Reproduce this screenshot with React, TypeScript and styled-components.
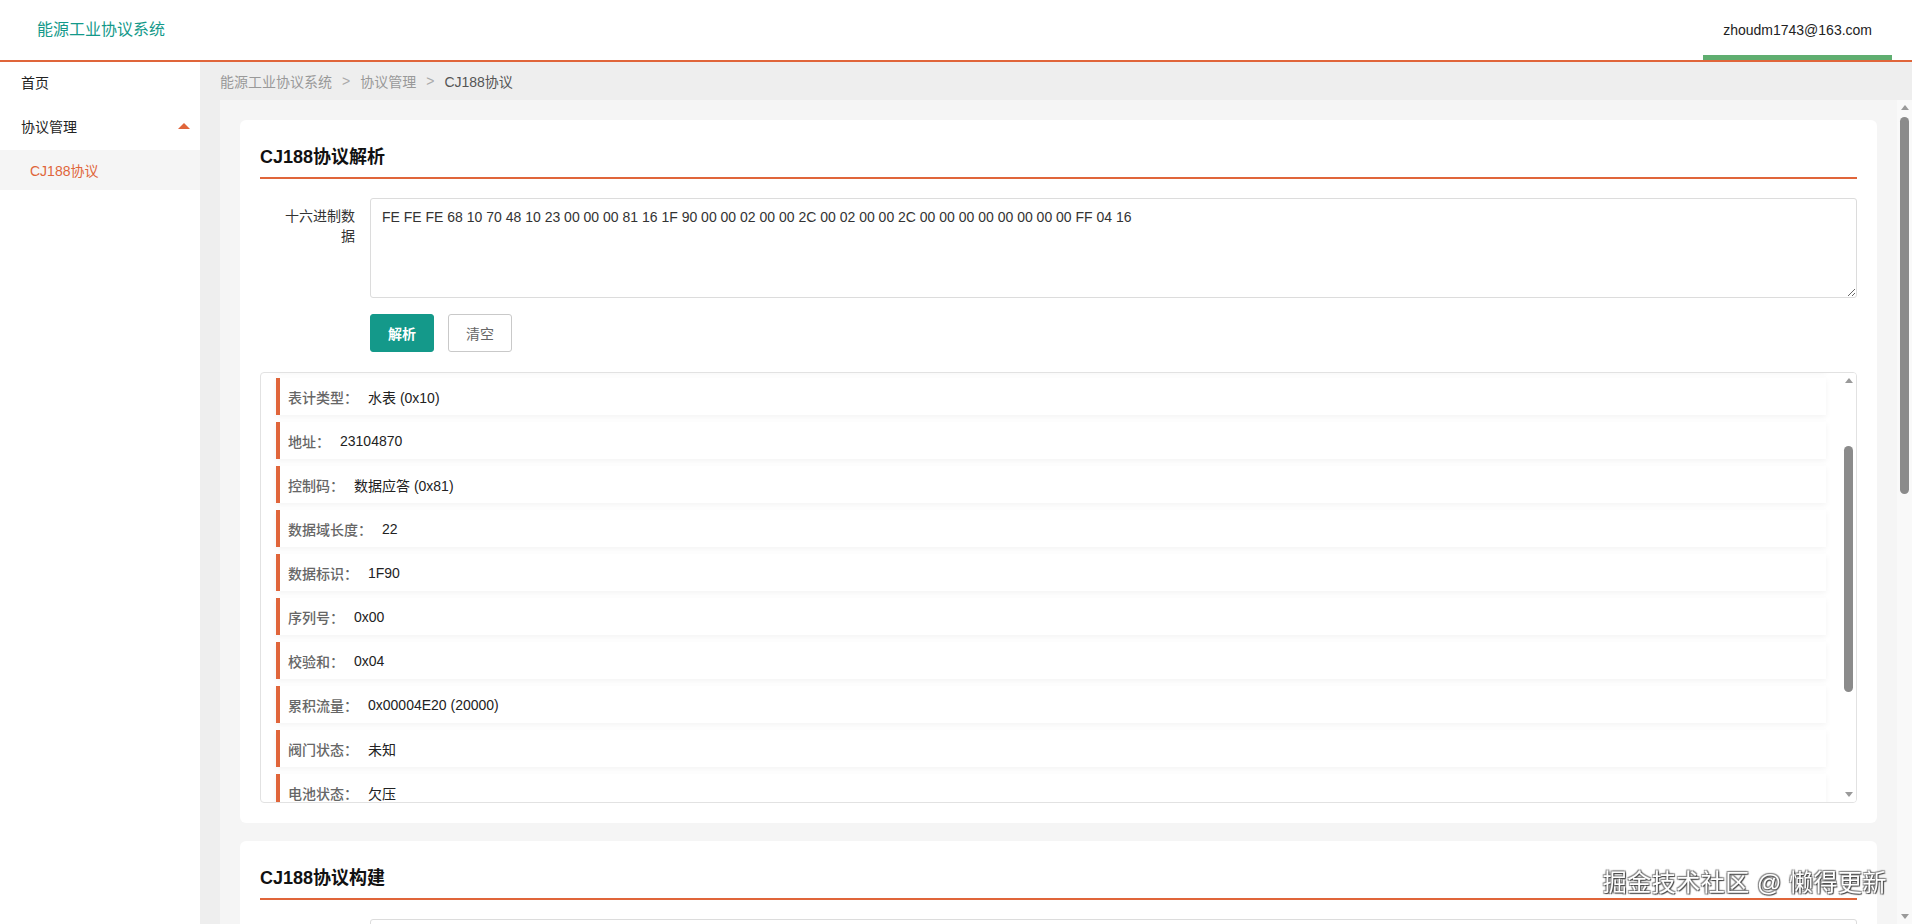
import React, { useLayoutEffect, useRef, useState } from 'react'
import styled, { createGlobalStyle, css } from 'styled-components'

const orange = '#e0653a'
const teal = '#14998a'

const GlobalStyle = createGlobalStyle`
  html, body {
    margin: 0;
    padding: 0;
    height: 100%;
    overflow: hidden;
  }
  body {
    font-family: "Liberation Sans", Arial, "Noto Sans CJK SC", sans-serif;
    font-size: 14px;
    color: #333;
    background: #fff;
  }
  #root { height: 100%; }
  * { box-sizing: border-box; }
`

const Page = styled.div`
  height: 100%;
  display: flex;
  flex-direction: column;
`

const Header = styled.header`
  height: 62px;
  flex-shrink: 0;
  display: flex;
  align-items: center;
  justify-content: space-between;
  padding: 0 20px 0 37px;
  border-bottom: 2px solid ${orange};
  background: #fff;
`

const Brand = styled.div`
  color: ${teal};
  font-size: 16px;
  padding-bottom: 4px;
`

const UserTab = styled.div`
  height: 60px;
  display: flex;
  align-items: center;
  padding: 5px 20px 0;
  border-bottom: 5px solid #5fae70;
  color: #222;
  font-size: 14px;
`

const Body = styled.div`
  flex: 1;
  display: flex;
  min-height: 0;
`

const Sidebar = styled.nav`
  width: 200px;
  flex-shrink: 0;
  background: #fff;
`

const MenuItem = styled.div<{ $active?: boolean; $sub?: boolean; $h: number }>`
  height: ${p => p.$h}px;
  display: flex;
  align-items: center;
  justify-content: space-between;
  padding: 0 10px 0 ${p => (p.$sub ? 30 : 21)}px;
  color: ${p => (p.$active ? orange : '#222')};
  background: ${p => (p.$active ? '#f5f5f5' : '#fff')};
  font-size: 14px;
`

const Caret = styled.span`
  width: 0;
  height: 0;
  border-left: 6px solid transparent;
  border-right: 6px solid transparent;
  border-bottom: 6px solid ${orange};
`

const Main = styled.main`
  flex: 1;
  min-width: 0;
  display: flex;
  flex-direction: column;
  background: #eeeeee;
  padding-left: 20px;
`

const Crumbs = styled.div`
  height: 38px;
  flex-shrink: 0;
  display: flex;
  align-items: center;
  color: #999;
  font-size: 14px;
`

const CrumbSep = styled.span`
  margin: 0 10px;
  color: #aaa;
`

const CrumbCurrent = styled.span`
  color: #555;
`

/* ---- scroll pane with a drawn scrollbar rail ---- */

const Frame = styled.div`
  display: flex;
  min-height: 0;
  overflow: hidden;
`

const Viewport = styled.div<{ $pad: string }>`
  flex: 1;
  min-width: 0;
  overflow-y: auto;
  scrollbar-width: none;
  padding: ${p => p.$pad};
  &::-webkit-scrollbar { display: none; }
`

const Rail = styled.div<{ $bg: string }>`
  width: 15px;
  flex-shrink: 0;
  display: flex;
  flex-direction: column;
  background: ${p => p.$bg};
`

const Arrow = styled.div<{ $down?: boolean }>`
  height: 15px;
  flex-shrink: 0;
  display: flex;
  align-items: center;
  justify-content: center;

  &::after {
    content: '';
    width: 0;
    height: 0;
    border-left: 4px solid transparent;
    border-right: 4px solid transparent;
    ${p =>
      p.$down
        ? css`border-top: 5px solid #9a9a9a;`
        : css`border-bottom: 5px solid #9a9a9a;`}
  }
`

const Track = styled.div`
  flex: 1;
  min-height: 0;
  padding: 2px 3px;
`

const Thumb = styled.div`
  width: 9px;
  border-radius: 5px;
  background: #8b8b8b;
`

type PaneProps = {
  children: React.ReactNode
  className?: string
  pad: string
  railBg: string
  startAt?: number
}

const ScrollPane = ({ children, className, pad, railBg, startAt = 0 }: PaneProps) => {
  const viewRef = useRef<HTMLDivElement>(null)
  const trackRef = useRef<HTMLDivElement>(null)
  const [bar, setBar] = useState({ top: 0, height: 0 })

  useLayoutEffect(() => {
    const el = viewRef.current
    const track = trackRef.current
    if (!el || !track) return
    const update = () => {
      const t = track.clientHeight - 4
      const h = Math.max(20, (t * el.clientHeight) / el.scrollHeight)
      const top = (t * el.scrollTop) / el.scrollHeight
      setBar({ top, height: h })
    }
    el.scrollTop = startAt
    update()
    el.addEventListener('scroll', update)
    window.addEventListener('resize', update)
    return () => {
      el.removeEventListener('scroll', update)
      window.removeEventListener('resize', update)
    }
  }, [startAt])

  return (
    <Frame className={className}>
      <Viewport ref={viewRef} $pad={pad}>
        {children}
      </Viewport>
      <Rail $bg={railBg}>
        <Arrow />
        <Track ref={trackRef}>
          <Thumb style={{ marginTop: bar.top, height: bar.height }} />
        </Track>
        <Arrow $down />
      </Rail>
    </Frame>
  )
}

const MainPane = styled(ScrollPane)`
  flex: 1;
  background: #f5f5f5;
`

const ResultPane = styled(ScrollPane)`
  margin-top: 20px;
  height: 431px;
  border: 1px solid #e2e2e2;
  border-radius: 4px;
  background: #fff;
`

/* ---- cards and forms ---- */

const Card = styled.section<{ $minHeight?: number }>`
  background: #fff;
  border-radius: 6px;
  padding: 20px;
  margin-bottom: 18px;
  min-height: ${p => (p.$minHeight ? `${p.$minHeight}px` : 'auto')};

  &:last-child { margin-bottom: 0; }
`

const CardTitle = styled.h3`
  margin: 0 0 19px;
  padding: 5px 0 8px;
  line-height: 24px;
  font-size: 18px;
  font-weight: bold;
  color: #111;
  border-bottom: 2px solid ${orange};
`

const FormRow = styled.div`
  display: grid;
  grid-template-columns: 110px 1fr;
  margin-bottom: 16px;
`

const Label = styled.label`
  text-align: right;
  padding: 8px 15px 0 14px;
  line-height: 20px;
  color: #333;
  font-size: 14px;
`

const TextArea = styled.textarea<{ $height?: number }>`
  width: 100%;
  height: ${p => p.$height ?? 100}px;
  border: 1px solid #dcdcdc;
  border-radius: 3px;
  padding: 8px 11px;
  line-height: 20px;
  font-family: inherit;
  font-size: 14px;
  color: #333;
  outline: none;
`

const fieldBox = css`
  width: 100%;
  height: 36px;
  border: 1px solid #dcdcdc;
  border-radius: 3px;
  font-family: inherit;
  font-size: 14px;
  color: #333;
  background: #fff;
  outline: none;
`

const Input = styled.input`
  ${fieldBox}
  padding: 0 11px;
`

const Select = styled.select`
  ${fieldBox}
  padding: 0 7px;
`

const Actions = styled.div`
  display: flex;
  gap: 14px;
`

const Button = styled.button<{ $primary?: boolean }>`
  width: 64px;
  height: 38px;
  border-radius: 3px;
  font-family: inherit;
  font-size: 14px;
  cursor: pointer;
  ${p =>
    p.$primary
      ? css`
          background: ${teal};
          border: 1px solid ${teal};
          color: #fff;
          font-weight: bold;
        `
      : css`
          background: #fff;
          border: 1px solid #c9c9c9;
          color: #666;
        `}
`

const ResultItem = styled.div`
  height: 37px;
  margin: 0 0 7px;
  display: flex;
  align-items: center;
  padding-left: 8px;
  background: #fff;
  border-left: 4px solid ${orange};
  box-shadow: 0 2px 6px rgba(0, 0, 0, 0.05);
`

const ItemLabel = styled.span`
  color: #666;
  font-weight: 500;
  margin-right: 10px;
`

const ItemValue = styled.span`
  color: #222;
`

const Watermark = styled.div`
  position: fixed;
  right: 25px;
  bottom: 26px;
  font-size: 24px;
  color: #fff;
  letter-spacing: 0.5px;
  text-shadow: 1px 1px 1px #444, -1px -1px 1px #888, 1px -1px 1px #888, -1px 1px 1px #888;
  pointer-events: none;
`

const hexInput =
  'FE FE FE 68 10 70 48 10 23 00 00 00 81 16 1F 90 00 00 02 00 00 2C 00 02 00 00 2C 00 00 00 00 00 00 00 00 FF 04 16'

const parsed: [string, string][] = [
  ['前导字节', 'FE FE FE'],
  ['起始符', '0x68'],
  ['表计类型', '水表 (0x10)'],
  ['地址', '23104870'],
  ['控制码', '数据应答 (0x81)'],
  ['数据域长度', '22'],
  ['数据标识', '1F90'],
  ['序列号', '0x00'],
  ['校验和', '0x04'],
  ['累积流量', '0x00004E20 (20000)'],
  ['阀门状态', '未知'],
  ['电池状态', '欠压'],
  ['结算日累积流量', '0x00002C00'],
  ['状态字', '0xFF'],
  ['结束符', '0x16']
]

const App = () => {
  return (
    <Page>
      <GlobalStyle />
      <Header>
        <Brand>能源工业协议系统</Brand>
        <UserTab>zhoudm1743@163.com</UserTab>
      </Header>
      <Body>
        <Sidebar>
          <MenuItem $h={40}>首页</MenuItem>
          <MenuItem $h={48}>
            协议管理
            <Caret />
          </MenuItem>
          <MenuItem $h={40} $sub $active>CJ188协议</MenuItem>
        </Sidebar>
        <Main>
          <Crumbs>
            <span>能源工业协议系统</span>
            <CrumbSep>&gt;</CrumbSep>
            <span>协议管理</span>
            <CrumbSep>&gt;</CrumbSep>
            <CrumbCurrent>CJ188协议</CrumbCurrent>
          </Crumbs>
          <MainPane pad="20px" railBg="#f9f9f9">
            <Card>
              <CardTitle>CJ188协议解析</CardTitle>
              <FormRow>
                <Label>十六进制数据</Label>
                <TextArea defaultValue={hexInput} />
              </FormRow>
              <FormRow>
                <span />
                <Actions>
                  <Button $primary>解析</Button>
                  <Button>清空</Button>
                </Actions>
              </FormRow>
              <ResultPane pad="15px" railBg="#fff" startAt={98}>
                {parsed.map(([k, v]) => (
                  <ResultItem key={k}>
                    <ItemLabel>{k}：</ItemLabel>
                    <ItemValue>{v}</ItemValue>
                  </ResultItem>
                ))}
              </ResultPane>
            </Card>

            <Card $minHeight={966}>
              <CardTitle>CJ188协议构建</CardTitle>
              <FormRow>
                <Label>表计类型</Label>
                <Select defaultValue="10">
                  <option value="10">水表 (0x10)</option>
                  <option value="20">热量表 (0x20)</option>
                  <option value="30">燃气表 (0x30)</option>
                </Select>
              </FormRow>
              <FormRow>
                <Label>表地址</Label>
                <Input defaultValue="23104870" />
              </FormRow>
              <FormRow>
                <Label>控制码</Label>
                <Select defaultValue="01">
                  <option value="01">读数据 (0x01)</option>
                  <option value="81">数据应答 (0x81)</option>
                </Select>
              </FormRow>
              <FormRow>
                <Label>数据标识</Label>
                <Input defaultValue="1F90" />
              </FormRow>
              <FormRow>
                <Label>序列号</Label>
                <Input defaultValue="00" />
              </FormRow>
              <FormRow>
                <Label>累积流量</Label>
                <Input defaultValue="20000" />
              </FormRow>
              <FormRow>
                <Label>阀门状态</Label>
                <Select defaultValue="0">
                  <option value="0">开阀</option>
                  <option value="1">关阀</option>
                </Select>
              </FormRow>
              <FormRow>
                <Label>电池状态</Label>
                <Select defaultValue="0">
                  <option value="0">正常</option>
                  <option value="1">欠压</option>
                </Select>
              </FormRow>
              <FormRow>
                <span />
                <Actions>
                  <Button $primary>构建</Button>
                  <Button>重置</Button>
                </Actions>
              </FormRow>
              <FormRow>
                <Label>生成结果</Label>
                <TextArea $height={120} readOnly />
              </FormRow>
            </Card>
          </MainPane>
        </Main>
      </Body>
      <Watermark>掘金技术社区 @ 懒得更新</Watermark>
    </Page>
  )
}

export default App
